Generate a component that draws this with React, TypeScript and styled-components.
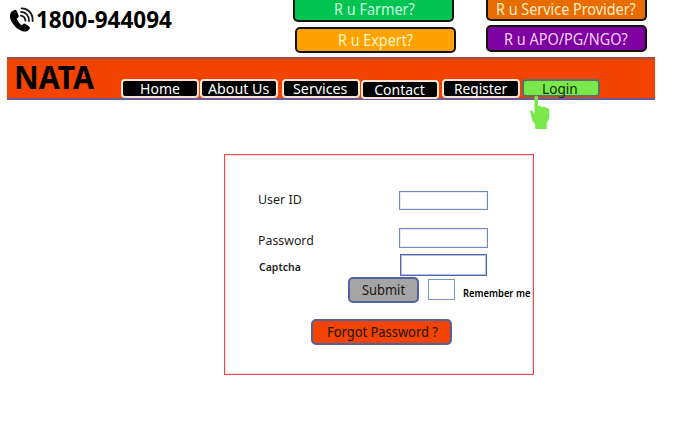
import React, { useLayoutEffect, useRef, useState } from "react";
import styled, { createGlobalStyle } from "styled-components";

const GlobalStyle = createGlobalStyle`
  * { box-sizing: border-box; }
  body { margin: 0; background: #fff; overflow: hidden; }
  button { padding: 0; margin: 0; font: inherit; cursor: pointer; }
`;

const Page = styled.div`
  width: 676px;
  height: 427px;
  overflow: hidden;
  font-family: "Noto Sans", "Open Sans", sans-serif;
  color: #000;
  background: #fff;
`;

const TopBar = styled.header`
  display: flex;
  height: 57px;
`;

const PhoneBlock = styled.div`
  display: flex;
  width: 293px;
  padding: 6px 0 0 9px;
`;

const PhoneIcon = styled.svg`
  width: 26px;
  height: 26px;
  margin-right: 1px;
`;

const CtaColumn = styled.div<{ $gap: number; $left?: number }>`
  display: flex;
  flex-direction: column;
  gap: ${(p) => p.$gap}px;
  margin-left: ${(p) => p.$left ?? 0}px;
`;

const Cta = styled.button<{ $bg: string; $fg: string; $first?: boolean; $height: number; $indent?: number; $pad: number; $line: number }>`
  display: flex;
  width: 161px;
  height: ${(p) => p.$height}px;
  margin-left: ${(p) => p.$indent ?? 0}px;
  padding-left: ${(p) => p.$pad}px;
  border: 2px solid #16120c;
  border-top-width: ${(p) => (p.$first ? 0 : 2)}px;
  border-radius: ${(p) => (p.$first ? "0 0 5px 5px" : "5px")};
  background: ${(p) => p.$bg};
  color: ${(p) => p.$fg};
  font-size: 15.5px;
  line-height: ${(p) => p.$line}px;
`;

const Banner = styled.div`
  display: flex;
  width: 648px;
  height: 43px;
  margin-left: 7px;
  padding-left: 7px;
  border: solid #7a4a62;
  border-width: 2px 0;
  border-top-color: #94504f;
  border-bottom-color: #6a5a92;
  background: #f24400;
`;

const Brand = styled.div`
  width: 107px;
  font-size: 33px;
  font-weight: 700;
  line-height: 35px;
`;

const Nav = styled.nav`
  display: flex;
  align-items: flex-start;
  padding-top: 20px;
`;

const NavItem = styled.button<{ $active?: boolean; $gap: number; $shift: number; $pad: number }>`
  display: flex;
  width: 78px;
  height: ${(p) => (p.$active ? 18 : 19)}px;
  margin: ${(p) => p.$shift}px 0 0 ${(p) => p.$gap}px;
  padding-left: ${(p) => p.$pad}px;
  border: 2px solid ${(p) => (p.$active ? "#5b7065" : "#fde3d2")};
  border-radius: 4px;
  background: ${(p) => (p.$active ? "#78e84a" : "#000")};
  color: ${(p) => (p.$active ? "#102c08" : "#fff")};
  font-size: 14px;
  line-height: 15px;
`;

const Content = styled.main`
  position: relative;
  padding: 54px 0 0 224px;
`;

const Pointer = styled.svg`
  position: absolute;
  left: 529px;
  top: -5px;
  width: 22px;
  height: 35px;
`;

const LoginForm = styled.form`
  width: 310px;
  height: 221px;
  padding-top: 36px;
  border: 1px solid #ed4a50;
  box-shadow: inset 0 0 0 1px #fbdcdc;
`;

const Field = styled.label<{ $height: number; $pad?: number }>`
  display: flex;
  height: ${(p) => p.$height}px;
  padding-left: ${(p) => p.$pad ?? 33}px;
`;

const FieldLabel = styled.span<{ $small?: boolean; $top?: number }>`
  width: 141px;
  margin-top: ${(p) => p.$top ?? 0}px;
  color: #1c1c1c;
  font-size: ${(p) => (p.$small ? 11 : 13)}px;
  font-weight: ${(p) => (p.$small ? 600 : 400)};
  line-height: 16px;
`;

const Input = styled.input<{ $width?: number; $height: number; $strong?: boolean }>`
  width: ${(p) => p.$width ?? 89}px;
  height: ${(p) => p.$height}px;
  margin: 0;
  padding: 0 3px;
  border: 1px solid ${(p) => (p.$strong ? "#5266b0" : "#7388c6")};
  border-radius: 0;
  outline: 0;
  background: #fff;
  box-shadow: inset 0 0 0 1px ${(p) => (p.$strong ? "#b4bee2" : "#e6eaf6")};
`;

const Actions = styled.div`
  display: flex;
  padding-left: 123px;
  height: 42px;
`;

const ActionButton = styled.button<{ $bg: string; $width: number; $pad: number }>`
  display: flex;
  width: ${(p) => p.$width}px;
  height: 26px;
  padding-left: ${(p) => p.$pad}px;
  border: 2px solid #53629c;
  border-radius: 5px;
  background: ${(p) => p.$bg};
  color: #1c1410;
  font-size: 13.5px;
  line-height: 22px;
`;

const Checkbox = styled.input`
  appearance: none;
  width: 27px;
  height: 21px;
  margin: 2px 8px 0 9px;
  border: 1px solid #7d93c8;
  background: #fff;
`;

const Remember = styled.label`
  padding-top: 8px;
  font-size: 10.5px;
  font-weight: 600;
  line-height: 16px;
`;

const ForgotRow = styled.div`
  padding-left: 86px;
`;

const FitBox = styled.span`
  display: block;
  white-space: nowrap;
`;

const FitInner = styled.span`
  display: inline-block;
  transform-origin: 0 50%;
`;

/* Condenses or widens a caption so that it fills the given width. */
function Fit({ width, children }: { width: number; children: string }) {
  const ref = useRef<HTMLSpanElement>(null);
  const [scale, setScale] = useState(1);
  useLayoutEffect(() => {
    if (ref.current) setScale(width / ref.current.offsetWidth);
  }, [width, children]);
  return (
    <FitBox style={{ width }}>
      <FitInner ref={ref} style={{ transform: `scaleX(${scale})` }}>{children}</FitInner>
    </FitBox>
  );
}

const PhoneNumber = styled.div`
  font-size: 22.5px;
  font-weight: 700;
  line-height: 27px;
`;

const navItems = [
  { label: "Home", text: 40, pad: 17, gap: 0, shift: 0 },
  { label: "About Us", text: 61, pad: 6, gap: 1, shift: 0 },
  { label: "Services", text: 54, pad: 9, gap: 4, shift: 0 },
  { label: "Contact", text: 51, pad: 11, gap: 1, shift: 1 },
  { label: "Register", text: 53, pad: 10, gap: 3, shift: 0 },
  { label: "Login", text: 36, pad: 18, gap: 2, shift: 0, active: true },
];

export default function App() {
  return (
    <>
      <GlobalStyle />
      <Page>
        <TopBar>
          <PhoneBlock>
            <PhoneIcon viewBox="0 0 26 26" fill="none">
              <path d="M3.5 5 C.6 7 .2 11 2.4 15.2 C5.3 20.8 10.3 24.6 14.5 25.5 C17.2 26 19.8 24.6 20.8 22.4 C21.1 21.5 20.8 21 20.2 20.6 L16 17.8 C15.3 17.4 14.5 17.6 14 18.2 L13 19.3 C11 18.6 8.5 15.2 7.8 12.6 L9.2 11.4 C9.8 10.9 9.9 10.2 9.6 9.5 L7.6 4.7 C7.2 3.9 6.4 3.6 5.6 4 Z" fill="#000" />
              <g stroke="#111" strokeWidth="1.8" strokeLinecap="round">
                <path d="M11.9 9.6 C14.5 10 16.3 11.8 16.4 14.8" />
                <path d="M12 5.8 C16.8 6 20.2 9.7 20 15" />
                <path d="M12.6 2.3 C19.5 2.4 24.2 8 23.6 15.1" />
              </g>
            </PhoneIcon>
            <PhoneNumber><Fit width={136}>1800-944094</Fit></PhoneNumber>
          </PhoneBlock>
          <CtaColumn $gap={5}>
            <Cta $first $bg="#03c450" $fg="#c8ffe0" $height={22} $pad={39} $line={18}><Fit width={81}>R u Farmer?</Fit></Cta>
            <Cta $bg="#ffa200" $fg="#fff6cc" $height={26} $indent={2} $pad={41} $line={23}><Fit width={75}>R u Expert?</Fit></Cta>
          </CtaColumn>
          <CtaColumn $gap={4} $left={30}>
            <Cta $first $bg="#e96c03" $fg="#ffecc8" $height={21} $pad={8} $line={18}><Fit width={140}>R u Service Provider?</Fit></Cta>
            <Cta $bg="#7d00a0" $fg="#f6d0ff" $height={27} $pad={16} $line={25}><Fit width={124}>R u APO/PG/NGO?</Fit></Cta>
          </CtaColumn>
        </TopBar>
        <Banner>
          <Brand><Fit width={80}>NATA</Fit></Brand>
          <Nav>
            {navItems.map((n) => (
              <NavItem key={n.label} $pad={n.pad} $gap={n.gap} $shift={n.shift} $active={n.active}>
                <Fit width={n.text}>{n.label}</Fit>
              </NavItem>
            ))}
          </Nav>
        </Banner>
        <Content>
          <Pointer viewBox="0 0 22 35">
            <path d="M5.5 2 Q7.3 -.5 9 2 V11.5 L10.5 10.5 L13 12 L15 11.5 L17 13 Q20 12.6 20.3 15 V21.5 Q20.2 25 17.8 28 V34 H6.2 V29.5 Q3 26.5 2.4 22 L1.2 16.5 Q1.5 14.5 3.3 15.7 L5.5 19 Z" fill="#78e84a" />
          </Pointer>
          <LoginForm onSubmit={(e) => e.preventDefault()}>
            <Field $height={37}>
              <FieldLabel><Fit width={44}>User ID</Fit></FieldLabel>
              <Input $height={19} />
            </Field>
            <Field $height={26}>
              <FieldLabel $top={4}><Fit width={56}>Password</Fit></FieldLabel>
              <Input type="password" $height={20} />
            </Field>
            <Field $height={23} $pad={34}>
              <FieldLabel $small $top={5}><Fit width={42}>Captcha</Fit></FieldLabel>
              <Input $width={87} $height={22} $strong />
            </Field>
            <Actions>
              <ActionButton $bg="#a5a5a5" $width={71} $pad={12}><Fit width={43}>Submit</Fit></ActionButton>
              <Checkbox type="checkbox" id="remember" />
              <Remember htmlFor="remember"><Fit width={67}>Remember me</Fit></Remember>
            </Actions>
            <ForgotRow>
              <ActionButton type="button" $bg="#f24400" $width={141} $pad={14}><Fit width={111}>Forgot Password ?</Fit></ActionButton>
            </ForgotRow>
          </LoginForm>
        </Content>
      </Page>
    </>
  );
}
